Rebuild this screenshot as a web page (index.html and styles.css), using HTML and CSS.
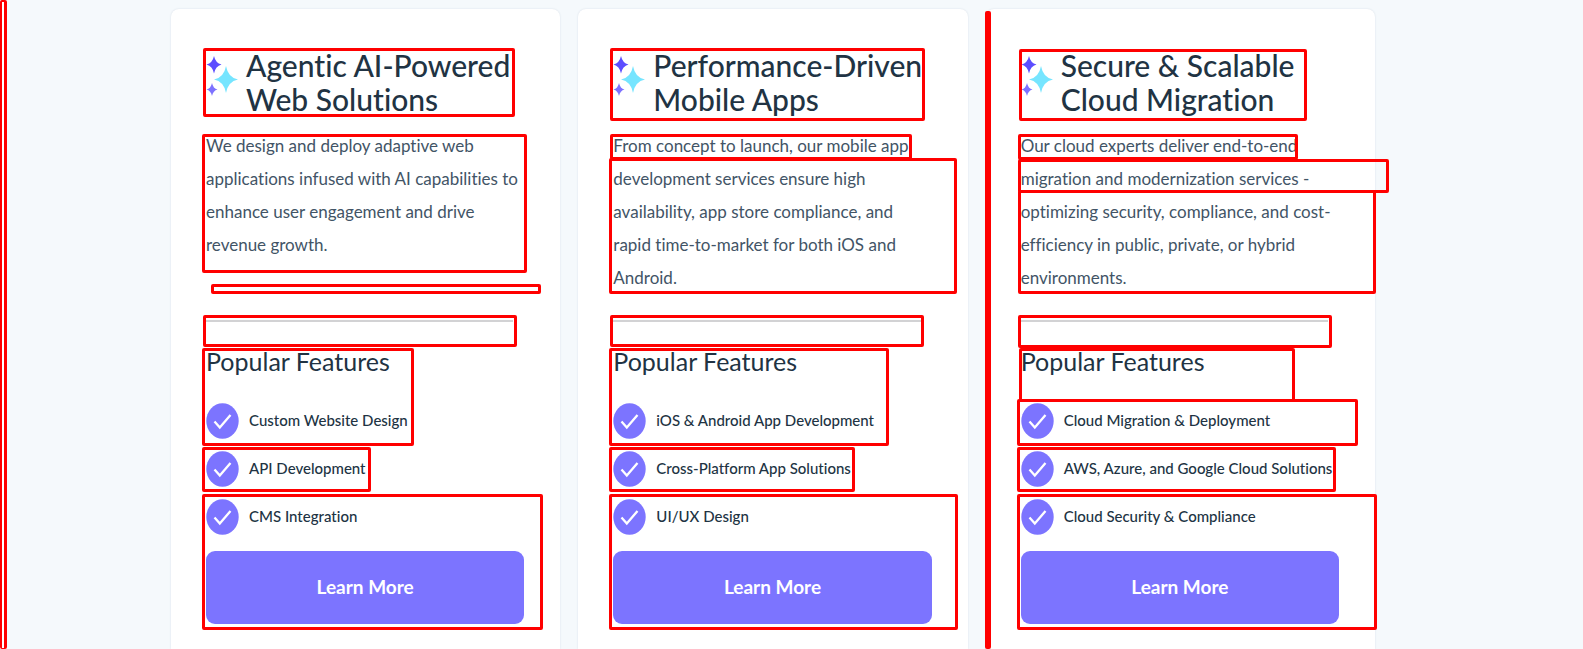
FILE: index.html
```html
<!DOCTYPE html>
<html lang="en">
<head>
<meta charset="utf-8">
<meta name="viewport" content="width=device-width, initial-scale=1">
<title>Services</title>
<link rel="stylesheet" href="styles.css">
</head>
<body>
<svg class="defs" aria-hidden="true">
  <symbol id="sparkles" viewBox="0 0 34 40">
    <path fill="#5c4dff" d="M8 0Q9.500 7 15.500 8.500Q9.500 10 8 17.500Q6.500 10 .5 8.500Q6.500 7 8 0Z"/>
    <path fill="#76e5ff" d="M20 10Q22 21.500 32 23.500Q22 25.500 20 37Q18 25.500 8 23.500Q18 21.500 20 10Z"/>
    <path fill="#7d72ff" d="M6 27Q7.200 32.500 11.500 33.500Q7.200 34.500 6 40Q4.800 34.500 .5 33.500Q4.800 32.500 6 27Z"/>
  </symbol>
  <symbol id="check" viewBox="0 0 33 36" preserveAspectRatio="none">
    <ellipse cx="16.500" cy="18" rx="16.200" ry="17.800" fill="#7c74ff"/>
    <path d="M8.500 18.500L13.800 24.500L24.500 12" fill="none" stroke="#fff" stroke-width="2.300"/>
  </symbol>
</svg>
<main class="services">
  <article class="card">
    <h2 class="title"><svg class="sparkles" aria-hidden="true"><use href="#sparkles"/></svg><span>Agentic AI-Powered<br>Web Solutions</span></h2>
    <p class="text">We design and deploy adaptive web<br>applications infused with AI capabilities to<br>enhance user engagement and drive<br>revenue growth.</p>
    <hr class="rule">
    <h3 class="subtitle">Popular Features</h3>
    <ul class="features">
      <li><svg class="check" aria-hidden="true"><use href="#check"/></svg><span>Custom Website Design</span></li>
      <li><svg class="check" aria-hidden="true"><use href="#check"/></svg><span>API Development</span></li>
      <li><svg class="check" aria-hidden="true"><use href="#check"/></svg><span>CMS Integration</span></li>
    </ul>
    <a class="button" href="#web">Learn More</a>
    <i class="mark a-title"></i><i class="mark a-text"></i><i class="mark a-gap"></i><i class="mark a-rule"></i><i class="mark a-features"></i><i class="mark a-second"></i><i class="mark a-last"></i>
  </article>
  <article class="card">
    <h2 class="title"><svg class="sparkles" aria-hidden="true"><use href="#sparkles"/></svg><span>Performance-Driven<br>Mobile Apps</span></h2>
    <p class="text">From concept to launch, our mobile app<br>development services ensure high<br>availability, app store compliance, and<br>rapid time-to-market for both iOS and<br>Android.</p>
    <hr class="rule">
    <h3 class="subtitle">Popular Features</h3>
    <ul class="features">
      <li><svg class="check" aria-hidden="true"><use href="#check"/></svg><span>iOS &amp; Android App Development</span></li>
      <li><svg class="check" aria-hidden="true"><use href="#check"/></svg><span>Cross-Platform App Solutions</span></li>
      <li><svg class="check" aria-hidden="true"><use href="#check"/></svg><span>UI/UX Design</span></li>
    </ul>
    <a class="button" href="#mobile">Learn More</a>
    <i class="mark b-title"></i><i class="mark b-line"></i><i class="mark b-text"></i><i class="mark b-rule"></i><i class="mark b-features"></i><i class="mark b-second"></i><i class="mark b-last"></i>
  </article>
  <article class="card">
    <h2 class="title"><svg class="sparkles" aria-hidden="true"><use href="#sparkles"/></svg><span>Secure &amp; Scalable<br>Cloud Migration</span></h2>
    <p class="text">Our cloud experts deliver end-to-end<br>migration and modernization services -<br>optimizing security, compliance, and cost-<br>efficiency in public, private, or hybrid<br>environments.</p>
    <hr class="rule">
    <h3 class="subtitle">Popular Features</h3>
    <ul class="features">
      <li><svg class="check" aria-hidden="true"><use href="#check"/></svg><span>Cloud Migration &amp; Deployment</span></li>
      <li><svg class="check" aria-hidden="true"><use href="#check"/></svg><span>AWS, Azure, and Google Cloud Solutions</span></li>
      <li><svg class="check" aria-hidden="true"><use href="#check"/></svg><span>Cloud Security &amp; Compliance</span></li>
    </ul>
    <a class="button" href="#cloud">Learn More</a>
    <i class="mark c-edge"></i><i class="mark c-title"></i><i class="mark c-line"></i><i class="mark c-line2"></i><i class="mark c-text"></i><i class="mark c-rule"></i><i class="mark c-subtitle"></i><i class="mark c-first"></i><i class="mark c-second"></i><i class="mark c-last"></i>
  </article>
</main>
<i class="mark page-edge"></i>
</body>
</html>
```
FILE: styles.css
```css
* { box-sizing: border-box; }

body {
  margin: 0;
  background: #f5f9fc;
  color: #213343;
  font-family: Lato, "Open Sans", sans-serif;
  font-variant-ligatures: none;
}

.defs { position: absolute; width: 0; height: 0; }

.services {
  display: grid;
  grid-template-columns: repeat(3, minmax(0, 1fr));
  gap: 18px;
  min-height: 100vh;
  padding: 9px 208px 0 171px;
}

.card {
  position: relative;
  padding: 39px 36px 24px 35px;
  background: #fff;
  border-radius: 8px 8px 0 0;
  box-shadow: 0 0 2px #d5dce6;
}

.title {
  display: flex;
  gap: 6px;
  margin: 0;
  font-size: 30px;
  font-weight: 500;
  line-height: 34px;
  white-space: nowrap;
}

.sparkles { flex: none; width: 34px; height: 40px; margin-top: 8px; }

.text {
  min-height: 165px;
  margin: 13px 0 26px;
  color: #425466;
  font-size: 17px;
  line-height: 33px;
  white-space: nowrap;
}

.rule {
  height: 2px;
  margin: 0 11px 0 0;
  border: 0;
  background: #d2d2d4;
}

.subtitle {
  margin: 23px 0 0;
  font-size: 25px;
  font-weight: 400;
  line-height: 32px;
}

.features {
  display: grid;
  gap: 12px;
  margin: 26px 0 0;
  padding: 0;
  list-style: none;
  font-size: 15px;
  font-weight: 500;
  white-space: nowrap;
}

.features li { display: flex; align-items: center; gap: 10px; height: 36px; }
.features span { padding-bottom: 3px; }

.check { flex: none; width: 33px; height: 36px; }

.button {
  display: flex;
  align-items: center;
  justify-content: center;
  height: 73px;
  margin: 16px 0 0;
  padding-bottom: 2px;
  border-radius: 9px;
  background: #7c74ff;
  color: #fff;
  font-size: 19px;
  font-weight: 700;
  text-decoration: none;
}

/* Review outlines laid over the cards */
.mark {
  position: absolute;
  border: 3px solid #f00;
  border-radius: 2px;
  pointer-events: none;
}

.page-edge { left: 0; top: 0; bottom: 0; width: 7px; border-width: 2px 3px 1px 2px; background: #fff; }

.a-title { left: 32px; top: 39px; width: 312px; height: 69px; }
.a-text { left: 31px; top: 125px; width: 325px; height: 139px; }
.a-gap { left: 40px; top: 275px; width: 330px; height: 10px; }
.a-rule { left: 32px; top: 306px; width: 314px; height: 32px; }
.a-features { left: 31px; top: 339px; width: 212px; height: 98px; }
.a-second { left: 31px; top: 438px; width: 169px; height: 45px; }
.a-last { left: 31px; top: 485px; width: 341px; height: 136px; }

.b-title { left: 32px; top: 39px; width: 315px; height: 73px; }
.b-line { left: 32px; top: 125px; width: 302px; height: 26px; }
.b-text { left: 31px; top: 149px; width: 348px; height: 136px; }
.b-rule { left: 32px; top: 306px; width: 314px; height: 32px; }
.b-features { left: 31px; top: 339px; width: 280px; height: 98px; }
.b-second { left: 31px; top: 438px; width: 246px; height: 45px; }
.b-last { left: 31px; top: 485px; width: 349px; height: 136px; }

.c-edge { left: -1px; top: 2px; bottom: 0; width: 6px; }
.c-title { left: 33px; top: 40px; width: 288px; height: 72px; }
.c-line { left: 32px; top: 125px; width: 280px; height: 26px; }
.c-line2 { left: 32px; top: 150px; width: 371px; height: 34px; }
.c-text { left: 32px; top: 181px; width: 358px; height: 104px; }
.c-rule { left: 32px; top: 306px; width: 314px; height: 33px; }
.c-subtitle { left: 33px; top: 339px; width: 276px; height: 54px; }
.c-first { left: 31px; top: 390px; width: 341px; height: 47px; }
.c-second { left: 31px; top: 438px; width: 319px; height: 45px; }
.c-last { left: 31px; top: 485px; width: 360px; height: 136px; }
```
